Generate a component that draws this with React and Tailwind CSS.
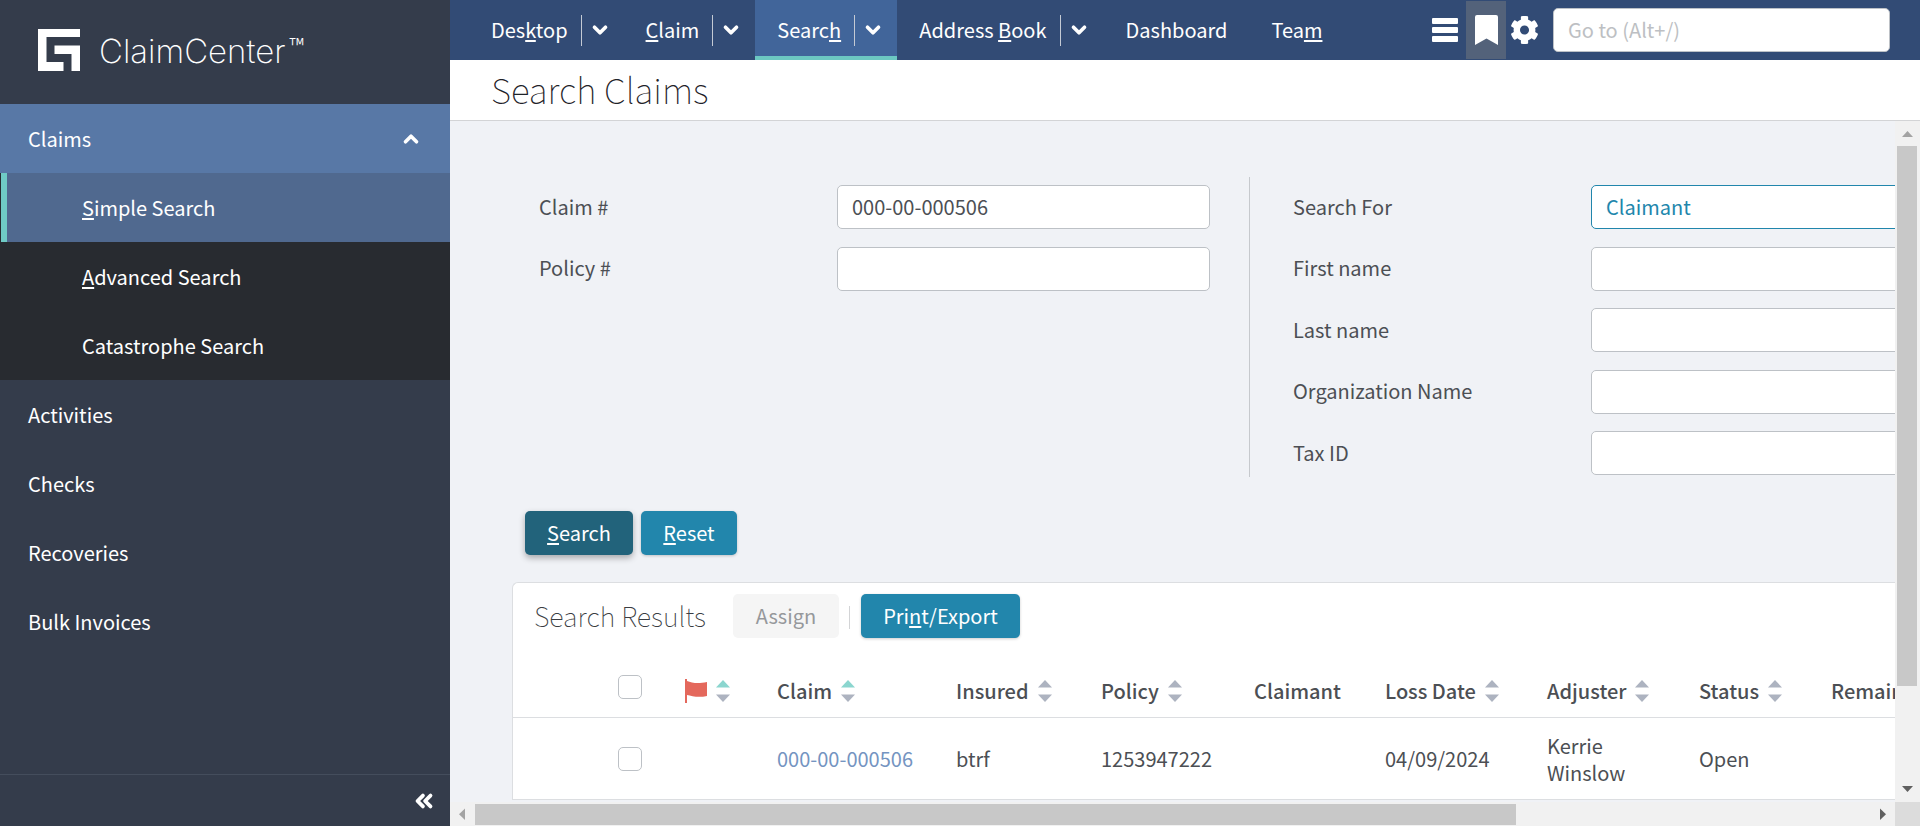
import { ChevronDown, ChevronUp, ChevronsLeft } from 'lucide-react';

const font = { fontFamily: '"Noto Sans CJK SC", "Noto Sans", sans-serif' };

const subItems = [
  { before: '', key: 'S', after: 'imple Search', active: true },
  { before: '', key: 'A', after: 'dvanced Search' },
  { before: 'Catastrophe Search', key: '', after: '' },
];

const sideItems = ['Activities', 'Checks', 'Recoveries', 'Bulk Invoices'];

const leftFields = [
  { label: 'Claim #', value: '000-00-000506' },
  { label: 'Policy #', value: '' },
];

const rightFields = [
  { label: 'Search For', value: 'Claimant', select: true },
  { label: 'First name', value: '' },
  { label: 'Last name', value: '' },
  { label: 'Organization Name', value: '' },
  { label: 'Tax ID', value: '' },
];

const columns = [
  { name: 'Claim', width: 'w-[179px]', up: true },
  { name: 'Insured', width: 'w-[145px]', sort: true },
  { name: 'Policy', width: 'w-[153px]', sort: true },
  { name: 'Claimant', width: 'w-[131px]' },
  { name: 'Loss Date', width: 'w-[162px]', sort: true },
  { name: 'Adjuster', width: 'w-[152px]', sort: true },
  { name: 'Status', width: 'w-[132px]', sort: true },
  { name: 'Remaining', width: 'w-[120px]' },
];

const SortArrows = ({ up }) => (
  <svg width="14" height="22" viewBox="0 0 14 22" className="ml-[9px] shrink-0">
    <path d="M7 0 L14 7.5 L0 7.5 Z" fill={up ? '#8bd6cf' : '#adb3c0'} />
    <path d="M0 14.5 L14 14.5 L7 22 Z" fill="#adb3c0" />
  </svg>
);

const Key = ({ children }) => <span className="underline underline-offset-2">{children}</span>;

const NavItem = ({ children, active, menu, className }) => (
  <div className={`flex h-[60px] items-center text-[20px] text-white ${active ? 'border-b-4 border-[#6cc8c2] bg-[#41659a] pt-1' : ''} ${className || ''}`}>
    <span>{children}</span>
    {menu && (
      <>
        <span className="ml-[13px] h-[31px] w-px bg-[#c4cad4]"></span>
        <ChevronDown className="ml-[7px]" size={22} strokeWidth={4} />
      </>
    )}
  </div>
);

const Field = ({ label, value, select }) => (
  <div className="flex h-[61.5px] items-start">
    <label className="w-[298px] pt-[7.5px] text-[20px] leading-[28px] text-[#4c4f54]">{label}</label>
    <div className={`h-[44px] flex-1 rounded-[5px] border bg-white px-[14px] text-[20px] leading-[42px] ${select ? 'border-[#2186ac] text-[#2186ac]' : 'border-[#bdc1c6] text-[#4c4f54]'}`}>
      {value}
    </div>
  </div>
);

const Checkbox = ({ className }) => <div className={`h-[24px] w-[24px] rounded-[5px] border border-[#bdc1c6] bg-white ${className || ''}`}></div>;

export default function App() {
  return (
    <div style={font} className="flex h-[826px] w-[1920px] overflow-hidden bg-[#f0f2f6]">
      {/* Sidebar */}
      <aside className="flex w-[450px] shrink-0 flex-col bg-[#343c4b] text-white">
        <div className="flex h-[104px] items-start pl-[38px] pt-[29px]">
          <svg width="42" height="42" viewBox="0 0 42 42" className="shrink-0">
            <path d="M0 0H42V8H8.5V33H25.5V42H0Z M16.5 16.5H42V42H33.5V25H16.5Z" fill="#fff" />
          </svg>
          <span style={{ fontFamily: 'Inter, sans-serif' }} className="ml-[19px] mt-[2px] text-[33px] font-extralight leading-[40px] text-white">ClaimCenter</span>
          <span className="ml-[4px] mt-[4px] text-[21px] font-extralight leading-[24px]">™</span>
        </div>
        <div className="flex h-[69px] items-center justify-between bg-[#5878a6] pl-[28px] pr-[28px] text-[20px]">
          <span>Claims</span>
          <ChevronUp size={22} strokeWidth={4} />
        </div>
        <div className="bg-[#282b30]">
          {subItems.map((item) => (
            <div key={item.before + item.after} className={`flex h-[69px] items-center text-[20px] ${item.active ? 'ml-px border-l-[6px] border-[#6fcbc5] bg-[#50698f] pl-[75px]' : 'pl-[82px]'}`}>
              {item.before}
              {item.key && <Key>{item.key}</Key>}
              {item.after}
            </div>
          ))}
        </div>
        {sideItems.map((item) => (
          <div key={item} className="flex h-[69px] items-center pl-[28px] text-[20px]">{item}</div>
        ))}
        <div className="mt-auto flex h-[52px] items-center justify-end border-t border-[#444d5c] pr-[13px]">
          <ChevronsLeft size={26} strokeWidth={3.5} />
        </div>
      </aside>

      {/* Main */}
      <main className="flex min-w-0 flex-1 flex-col">
        <nav className="flex h-[60px] shrink-0 items-center bg-[#324b75]">
          <NavItem menu className="pl-[41px]">Des<Key>k</Key>top</NavItem>
          <NavItem menu className="pl-[35px]"><Key>C</Key>laim</NavItem>
          <NavItem menu active className="ml-[13px] w-[142px] pl-[22px]">Searc<Key>h</Key></NavItem>
          <NavItem menu className="pl-[22px]">Address <Key>B</Key>ook</NavItem>
          <NavItem className="pl-[36px]">Dashboard</NavItem>
          <NavItem className="pl-[44px]">Tea<Key>m</Key></NavItem>
          <div className="ml-auto flex items-center pr-[30px]">
            <div className="flex w-[26px] flex-col gap-[3px]">
              <span className="h-[6px] rounded-[1px] bg-white"></span>
              <span className="h-[6px] rounded-[1px] bg-white"></span>
              <span className="h-[6px] rounded-[1px] bg-white"></span>
            </div>
            <div className="ml-[8px] flex h-[58px] w-[40px] items-center justify-center bg-[#53627a]">
              <svg width="23" height="30" viewBox="0 0 23 30"><path d="M2 0H21A2 2 0 0 1 23 2V30L11.5 23.5L0 30V2A2 2 0 0 1 2 0Z" fill="#fff" /></svg>
            </div>
            <svg width="29" height="30" viewBox="0 0 512 512" className="ml-[4px]">
              <path fill="#fff" d="M487.4 315.7l-42.6-24.6c4.3-23.2 4.3-47 0-70.2l42.6-24.6c4.9-2.8 7.1-8.6 5.5-14-11.1-35.6-30-67.8-54.7-94.6-3.8-4.1-10-5.1-14.8-2.3L380.8 110c-17.9-15.4-38.5-27.3-60.8-35.1V25.8c0-5.6-3.9-10.5-9.4-11.7-36.7-8.2-74.3-7.8-109.2 0-5.5 1.2-9.4 6.1-9.4 11.7V75c-22.2 7.9-42.8 19.8-60.8 35.1L88.7 85.5c-4.9-2.8-11-1.9-14.8 2.3-24.7 26.7-43.6 58.9-54.7 94.6-1.7 5.4.6 11.2 5.5 14L67.3 221c-4.3 23.2-4.3 47 0 70.2l-42.6 24.6c-4.9 2.8-7.1 8.6-5.5 14 11.1 35.6 30 67.8 54.7 94.6 3.8 4.1 10 5.1 14.8 2.3l42.6-24.6c17.9 15.4 38.5 27.3 60.8 35.1v49.2c0 5.6 3.9 10.5 9.4 11.7 36.7 8.2 74.3 7.8 109.2 0 5.5-1.2 9.4-6.1 9.4-11.7v-49.2c22.2-7.9 42.8-19.8 60.8-35.1l42.6 24.6c4.9 2.8 11 1.9 14.8-2.3 24.7-26.7 43.6-58.9 54.7-94.6 1.5-5.5-.7-11.3-5.6-14.1zM256 336c-44.1 0-80-35.9-80-80s35.9-80 80-80 80 35.9 80 80-35.9 80-80 80z" />
            </svg>
            <div className="ml-[14px] h-[44px] w-[337px] rounded-[5px] border border-[#bdc1c6] bg-white px-[14px] text-[20px] leading-[42px] text-[#bdbfc3]">Go to (Alt+/)</div>
          </div>
        </nav>

        <header className="flex h-[61px] shrink-0 items-center border-b border-[#d3d4d6] bg-white pb-[2px] pl-[41px] text-[35px] font-thin text-[#1f2329]">
          Search Claims
        </header>

        <div className="flex min-h-0 flex-1">
          <div className="flex min-w-0 flex-1 flex-col">
            {/* Scrolled content, wider than the window */}
            <div className="min-h-0 flex-1 overflow-hidden pl-[62px] pt-[56px]">
              <div className="flex h-[334px] w-[1500px] pt-[8px]">
                <div className="w-[737px] pl-[27px] pr-[39px]">
                  {leftFields.map((f) => <Field key={f.label} {...f} />)}
                </div>
                <div className="-mt-[8px] h-[300px] w-px bg-[#c6c9cd]"></div>
                <div className="w-[760px] pl-[43px]">
                  {rightFields.map((f) => <Field key={f.label} {...f} />)}
                </div>
              </div>

              <div className="flex gap-2 pl-[13px]">
                <button className="h-[44px] w-[108px] rounded-[5px] bg-[#22637b] text-[20px] text-white shadow-[0_3px_6px_rgba(0,0,0,0.3)]"><Key>S</Key>earch</button>
                <button className="h-[44px] w-[96px] rounded-[5px] bg-[#2286ac] text-[20px] text-white shadow-[0_1px_3px_rgba(0,0,0,0.2)]"><Key>R</Key>eset</button>
              </div>

              <section className="mt-[27px] w-[1500px] rounded-tl-[6px] border-l border-t border-[#dcdee1] bg-white">
                <div className="flex h-[55px] items-end pl-[21px]">
                  <span className="h-[44px] w-[199px] text-[27px] font-thin leading-[44px] text-[#3a3d42]">Search Results</span>
                  <div className="h-[44px] w-[106px] rounded-[5px] bg-[#f5f5f5] text-center text-[20px] leading-[44px] text-[#96989b]">Assign</div>
                  <span className="mb-[9px] ml-[10px] mr-[11px] h-[23px] w-px bg-[#d3d4d6]"></span>
                  <button className="h-[44px] w-[159px] rounded-[5px] bg-[#2286ac] text-[20px] text-white shadow-[0_1px_3px_rgba(0,0,0,0.2)]">Pri<Key>n</Key>t/Export</button>
                </div>
                <div className="flex h-[80px] items-center border-b border-[#dcdee1] pt-[26px]">
                  <div className="ml-[105px] w-[66px]"><Checkbox className="-mt-2" /></div>
                  <div className="flex w-[93px] items-center">
                    <svg width="23" height="24" viewBox="0 0 23 24"><path d="M1 0H3V2C8 4 14 5 23 3V17C14 19 8 17 3 16V24H1Z" fill="#e4685c" /></svg>
                    <SortArrows up />
                  </div>
                  {columns.map((c) => (
                    <div key={c.name} className={`flex shrink-0 items-center text-[20px] font-medium text-[#4c4f54] ${c.width}`}>
                      {c.name}
                      {(c.sort || c.up) && <SortArrows up={c.up} />}
                    </div>
                  ))}
                </div>
                <div className="flex h-[82px] items-center border-b border-[#dcdee1] text-[20px] text-[#4c4f54]">
                  <div className="ml-[105px] w-[66px]"><Checkbox className="mt-px" /></div>
                  <div className="w-[93px]"></div>
                  <div className="w-[179px] text-[#7494c1]">000-00-000506</div>
                  <div className="w-[145px]">btrf</div>
                  <div className="w-[153px]">1253947222</div>
                  <div className="w-[131px]"></div>
                  <div className="w-[162px]">04/09/2024</div>
                  <div className="w-[152px] leading-[27px]">Kerrie<br />Winslow</div>
                  <div className="w-[132px]">Open</div>
                </div>
              </section>
            </div>
            {/* Horizontal scrollbar */}
            <div className="flex h-[24px] shrink-0 items-center bg-[#f1f1f1]">
              <svg width="25" height="24" viewBox="0 0 25 24" className="shrink-0"><path d="M15 6.5V18L9 12.25Z" fill="#a3a3a3" /></svg>
              <div className="h-[21px] w-[1041px] bg-[#c8c8c8]"></div>
              <div className="flex-1"></div>
              <svg width="25" height="24" viewBox="0 0 25 24" className="shrink-0"><path d="M10 6.5V18L16 12.25Z" fill="#606060" /></svg>
            </div>
          </div>
          {/* Vertical scrollbar */}
          <div className="flex w-[25px] shrink-0 flex-col bg-[#f1f1f1]">
            <svg width="25" height="25" viewBox="0 0 25 25" className="shrink-0"><path d="M12.5 10L18 16H7Z" fill="#a3a3a3" /></svg>
            <div className="ml-[2px] h-[540px] w-[20px] bg-[#c8c8c8]"></div>
            <div className="flex-1"></div>
            <svg width="25" height="16" viewBox="0 0 25 16" className="shrink-0"><path d="M7 0H18L12.5 6Z" fill="#606060" /></svg>
            <div className="h-[24px] bg-[#dcdcdc]"></div>
          </div>
        </div>
      </main>
    </div>
  );
}
